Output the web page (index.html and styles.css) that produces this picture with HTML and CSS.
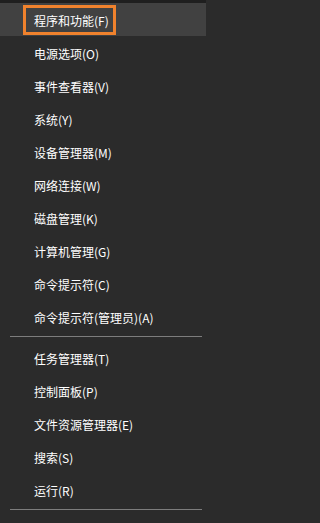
FILE: index.html
```html
<!DOCTYPE html>
<html lang="zh-CN">
<head>
<meta charset="utf-8">
<title>菜单</title>
<link rel="stylesheet" href="styles.css">
</head>
<body>
<div class="menu">
  <ul class="group">
    <li class="item active"><span class="label">程序和功能(F)</span><span class="mark"></span></li>
    <li class="item"><span class="label">电源选项(O)</span></li>
    <li class="item"><span class="label">事件查看器(V)</span></li>
    <li class="item"><span class="label">系统(Y)</span></li>
    <li class="item"><span class="label">设备管理器(M)</span></li>
    <li class="item"><span class="label">网络连接(W)</span></li>
    <li class="item"><span class="label">磁盘管理(K)</span></li>
    <li class="item"><span class="label">计算机管理(G)</span></li>
    <li class="item"><span class="label">命令提示符(C)</span></li>
    <li class="item"><span class="label">命令提示符(管理员)(A)</span></li>
  </ul>
  <div class="sep"></div>
  <ul class="group">
    <li class="item"><span class="label">任务管理器(T)</span></li>
    <li class="item"><span class="label">控制面板(P)</span></li>
    <li class="item"><span class="label">文件资源管理器(E)</span></li>
    <li class="item"><span class="label">搜索(S)</span></li>
    <li class="item"><span class="label">运行(R)</span></li>
  </ul>
  <div class="sep"></div>
</div>
</body>
</html>
```
FILE: styles.css
```css
html, body {
  margin: 0;
  padding: 0;
  background: #2b2b2b;
  height: 523px;
  overflow: hidden;
}
.menu {
  width: 206px;
  height: 523px;
  box-sizing: border-box;
  border-top: 3px solid #1f1f1f;
  background: #2b2b2b;
  font-family: "Noto Sans CJK SC", "Noto Sans", sans-serif;
  font-size: 12px;
  color: #ffffff;
}
.group {
  list-style: none;
  margin: 0;
  padding: 0;
}
.item {
  position: relative;
  height: 33px;
  padding-left: 34px;
  padding-top: 2px;
  box-sizing: border-box;
  display: flex;
  align-items: center;
}
.item.active {
  background: #414141;
}
.mark {
  position: absolute;
  left: 23px;
  top: 2px;
  width: 93px;
  height: 30px;
  box-sizing: border-box;
  border: 3px solid #f0822d;
}
.sep {
  height: 1px;
  margin: 3px 4px 4px 10px;
  background: #7d7d7d;
}
```
